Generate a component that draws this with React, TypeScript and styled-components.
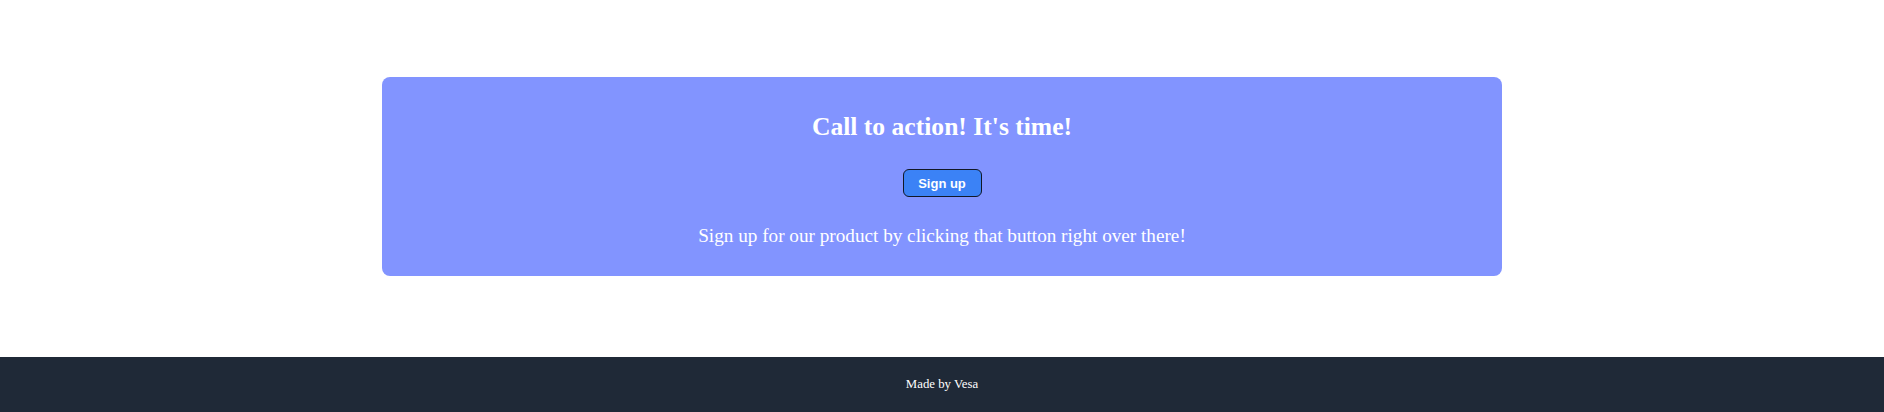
import React from "react";
import styled, { createGlobalStyle } from "styled-components";

const Global = createGlobalStyle`
  html, body { margin: 0; padding: 0; background: #ffffff; }
  body { font-family: "Liberation Serif", "Times New Roman", serif; }
`;

const Page = styled.div`
  display: flex;
  flex-direction: column;
  min-height: 412px;
`;

const Main = styled.main`
  display: flex;
  justify-content: center;
  padding-top: 77px;
  padding-bottom: 81px;
`;

const Card = styled.section`
  box-sizing: border-box;
  width: 1120px;
  height: 199px;
  background: #8294ff;
  border-radius: 8px;
  display: flex;
  flex-direction: column;
  align-items: center;
  padding-top: 35px;
  color: #ffffff;
`;

const Title = styled.h2`
  margin: 0;
  font-size: 25.6px;
  font-weight: bold;
  line-height: 29px;
`;

const Button = styled.button`
  box-sizing: border-box;
  margin-top: 28px;
  width: 79px;
  height: 28px;
  background: #3b82f6;
  color: #ffffff;
  border: 1px solid #111827;
  border-radius: 6px;
  font-family: "Liberation Sans", Arial, sans-serif;
  font-weight: bold;
  font-size: 13px;
  cursor: pointer;
`;

const Text = styled.p`
  margin: 28px 0 0;
  font-size: 19.2px;
  line-height: 22px;
`;

const Footer = styled.footer`
  height: 55px;
  background: #1f2937;
  color: #ffffff;
  display: flex;
  justify-content: center;
  align-items: center;
  font-size: 12.8px;
`;

export default function App() {
  return (
    <>
      <Global />
      <Page>
        <Main>
          <Card>
            <Title>Call to action! It's time!</Title>
            <Button>Sign up</Button>
            <Text>Sign up for our product by clicking that button right over there!</Text>
          </Card>
        </Main>
        <Footer>Made by Vesa</Footer>
      </Page>
    </>
  );
}
